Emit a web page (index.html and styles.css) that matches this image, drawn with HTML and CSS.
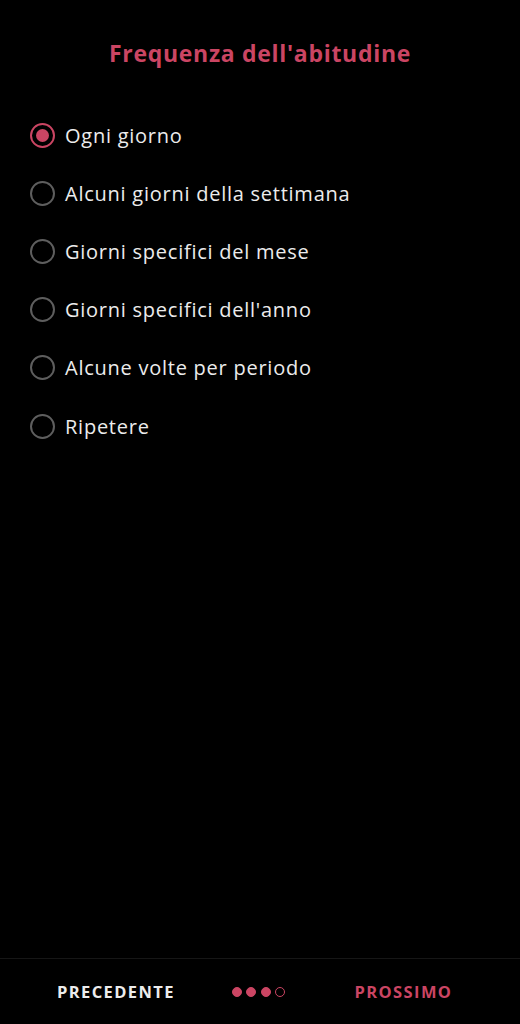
FILE: index.html
```html
<!DOCTYPE html>
<html lang="it">
<head>
    <meta charset="UTF-8">
    <meta name="viewport" content="width=device-width, initial-scale=1.0">
    <title>Frequenza dell'abitudine</title>
    <link rel="stylesheet" href="styles.css">
</head>
<body>
    <div class="screen">
        <header>
            <h1>Frequenza dell'abitudine</h1>
        </header>
        <main>
            <ul class="options">
                <li class="option selected"><span class="radio"></span>Ogni giorno</li>
                <li class="option"><span class="radio"></span>Alcuni giorni della settimana</li>
                <li class="option"><span class="radio"></span>Giorni specifici del mese</li>
                <li class="option"><span class="radio"></span>Giorni specifici dell'anno</li>
                <li class="option"><span class="radio"></span>Alcune volte per periodo</li>
                <li class="option"><span class="radio"></span>Ripetere</li>
            </ul>
        </main>
        <footer class="nav">
            <button class="nav-btn prev">PRECEDENTE</button>
            <div class="dots">
                <span class="dot on"></span>
                <span class="dot on"></span>
                <span class="dot on"></span>
                <span class="dot"></span>
            </div>
            <button class="nav-btn next">PROSSIMO</button>
        </footer>
    </div>
</body>
</html>
```

FILE: styles.css
```css
* {
    margin: 0;
    padding: 0;
    box-sizing: border-box;
}

body {
    font-family: "Open Sans", "Noto Sans", sans-serif;
    background-color: #000;
    color: #ececec;
}

.screen {
    height: 1024px;
    display: flex;
    flex-direction: column;
}

header {
    padding-top: 38px;
    text-align: center;
}

h1 {
    font-size: 23px;
    font-weight: 700;
    color: #cb4563;
    line-height: 30px;
    letter-spacing: 0.7px;
}

main {
    flex: 1;
    padding: 38px 0 0 30px;
}

.options {
    list-style: none;
}

.option {
    display: flex;
    align-items: center;
    gap: 10px;
    height: 58.2px;
    font-size: 20px;
    letter-spacing: 0.75px;
    color: #ececec;
}

.radio {
    width: 25px;
    height: 25px;
    border: 2px solid #5e5e5e;
    border-radius: 50%;
    display: flex;
    align-items: center;
    justify-content: center;
}

.option.selected .radio {
    border-color: #cb4563;
}

.option.selected .radio::after {
    content: "";
    width: 13px;
    height: 13px;
    border-radius: 50%;
    background-color: #cb4563;
}

.nav {
    height: 66px;
    border-top: 1px solid #161616;
    display: flex;
    align-items: center;
    justify-content: space-between;
    padding: 0 69px 0 57px;
}

.nav-btn {
    background: none;
    border: none;
    font-family: inherit;
    font-size: 16.5px;
    font-weight: 700;
    letter-spacing: 1.4px;
    cursor: pointer;
}

.prev {
    color: #ececec;
}

.next {
    color: #cb4563;
    margin-right: -1.4px;
}

.dots {
    display: flex;
    gap: 4.5px;
    margin-right: 12px;
}

.dot {
    width: 10px;
    height: 10px;
    border-radius: 50%;
    border: 1px solid #cb4563;
}

.dot.on {
    background-color: #cb4563;
}
```
